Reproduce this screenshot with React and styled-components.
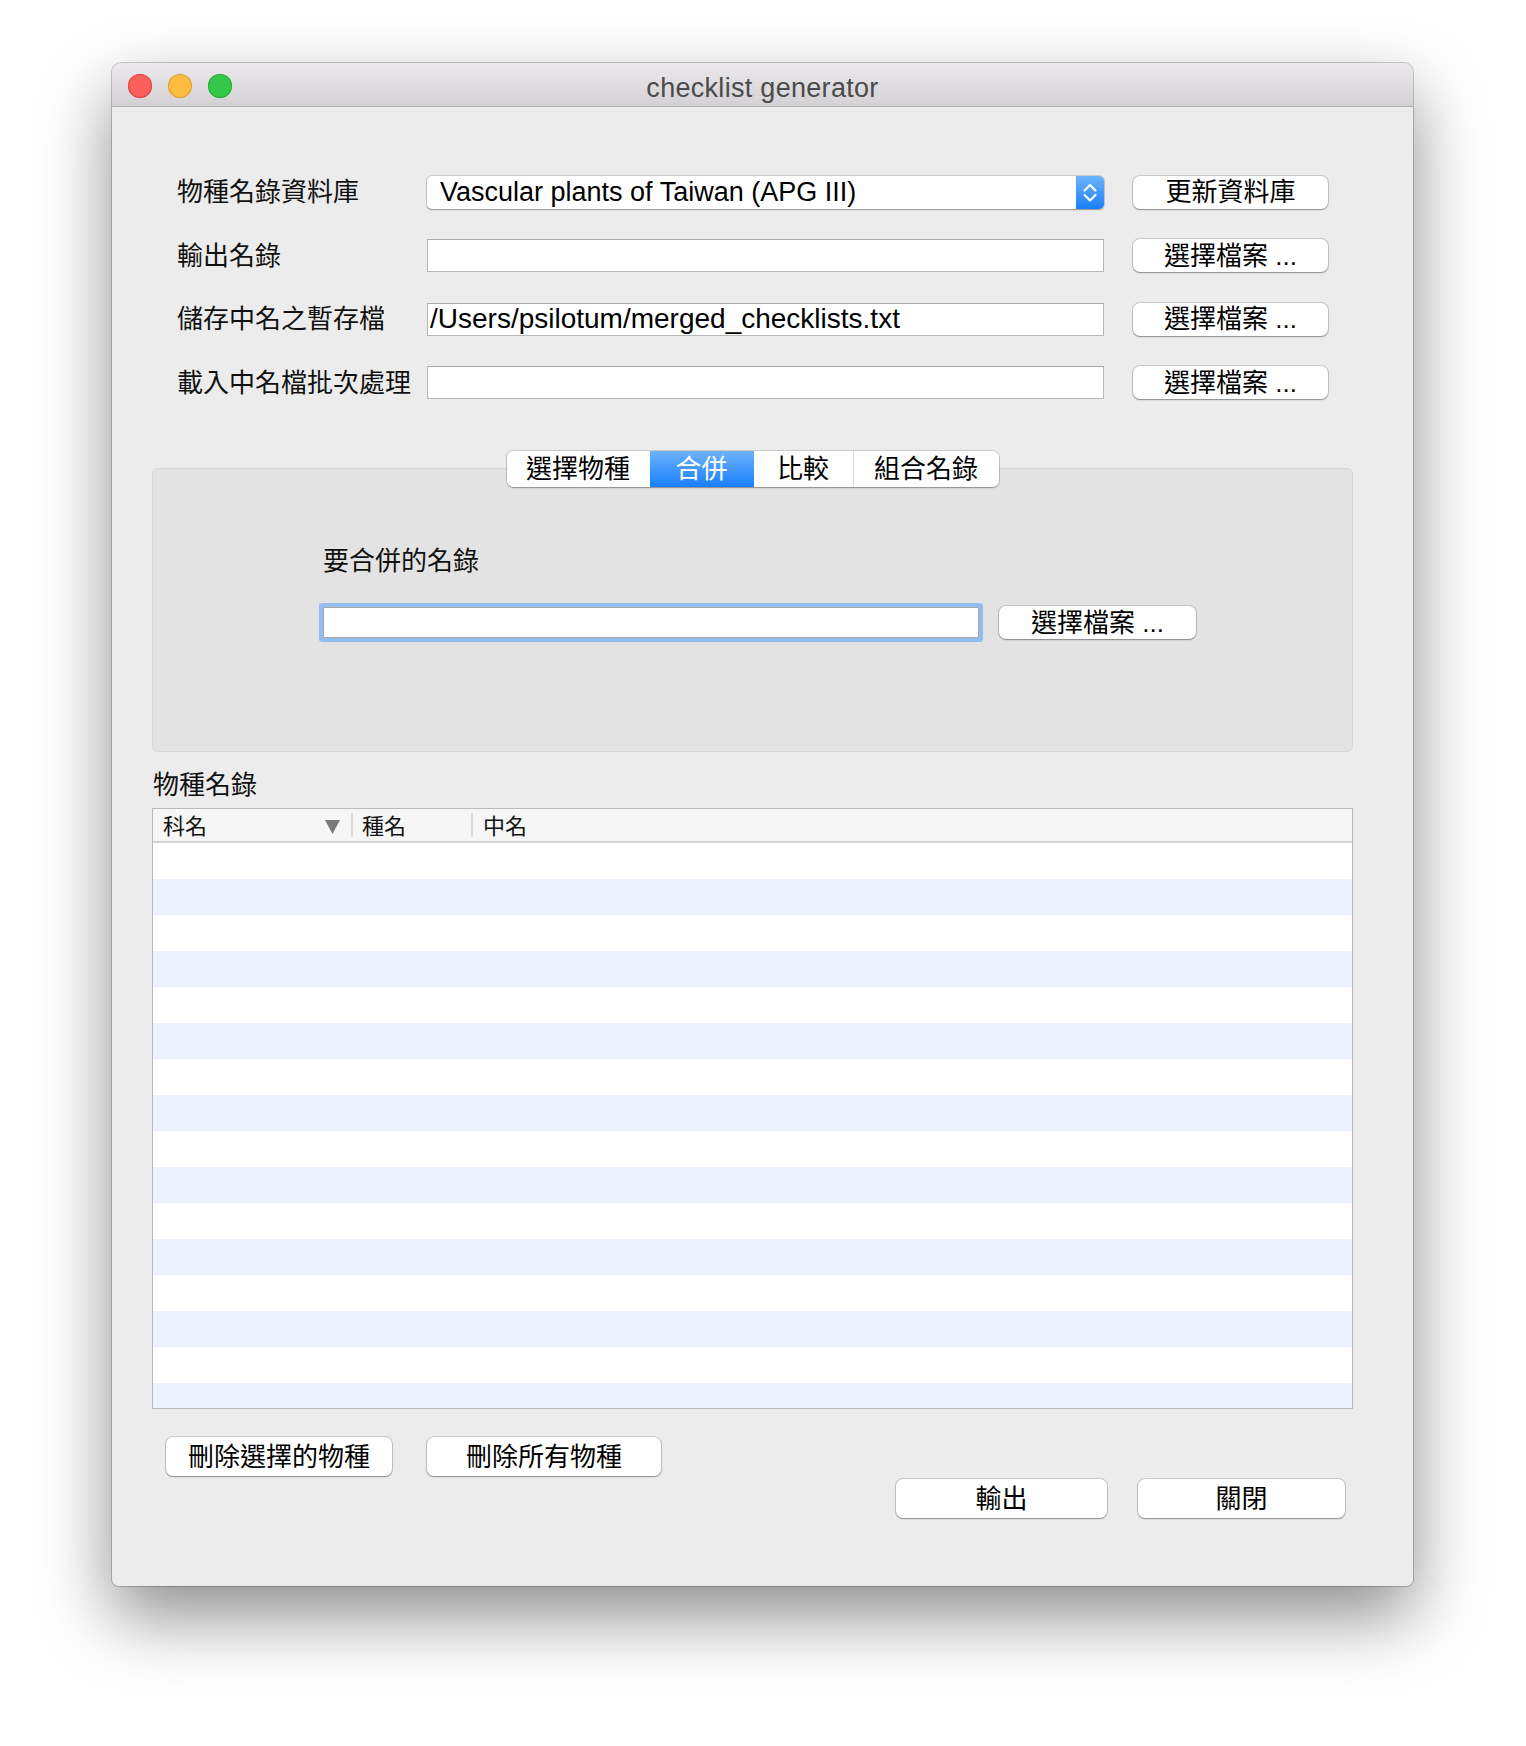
import React from "react";
import styled, { createGlobalStyle } from "styled-components";

const GlobalStyle = createGlobalStyle`
  html, body { margin: 0; padding: 0; background: #ffffff; }
  body { font-family: "Liberation Sans", "Noto Sans CJK TC", sans-serif; color: #000; }
  * { box-sizing: border-box; }
`;

const Page = styled.div`
  padding: 63px 0 0 112px;
  height: 1746px;
  overflow: hidden;
`;

const Window = styled.div`
  width: 1301px;
  background: #ececec;
  border-radius: 9px 9px 7px 7px;
  box-shadow: 0 0 0 1px rgba(0, 0, 0, 0.2), 0 30px 70px rgba(0, 0, 0, 0.45);
  display: flex;
  flex-direction: column;
  overflow: hidden;
`;

const TitleBar = styled.div`
  height: 44px;
  display: grid;
  grid-template-columns: 1fr auto 1fr;
  align-items: center;
  background: linear-gradient(#ebe9eb, #d3d1d3);
  border-bottom: 1px solid #b3b3b3;
`;

const Lights = styled.div`
  display: flex;
  gap: 16px;
  padding: 2px 0 0 16px;
`;

const Light = styled.span`
  width: 24px;
  height: 24px;
  border-radius: 50%;
  background: ${(p) => p.$c};
  box-shadow: inset 0 0 0 1px ${(p) => p.$b};
`;

const Title = styled.div`
  font-size: 27px;
  color: #4b4b4b;
  letter-spacing: 0.3px;
  padding-top: 7px;
`;

const Body = styled.div`
  display: flex;
  flex-direction: column;
  padding: 0 60px 68px 40px;
`;

const Form = styled.div`
  display: grid;
  grid-template-columns: 221px 677px 195px;
  column-gap: 29px;
  row-gap: 29.5px;
  grid-auto-rows: 34px;
  align-items: center;
  margin: 68px 25px 0;
`;

const Label = styled.div`
  font-size: 26px;
  color: #111;
  white-space: nowrap;
  padding-bottom: 5px;
`;

const Popup = styled.div`
  height: 33px;
  display: flex;
  background: #fff;
  border-radius: 5px;
  overflow: hidden;
  box-shadow: 0 0 0 1px rgba(0, 0, 0, 0.13), 0 1px 1.5px rgba(0, 0, 0, 0.28);
`;

const PopupText = styled.div`
  flex: 1;
  font-size: 27px;
  line-height: 33px;
  padding-left: 13px;
  white-space: nowrap;
`;

const Stepper = styled.div`
  width: 28px;
  display: flex;
  align-items: center;
  justify-content: center;
  background: linear-gradient(#6cb3fb, #1a7ffb);
`;

const TextField = styled.div`
  height: 33px;
  background: #fff;
  border: 1px solid #b7b7b7;
  border-top-color: #a9a9a9;
  font-size: 28px;
  line-height: 30px;
  padding: 0 2px;
  white-space: nowrap;
`;

const Button = styled.button`
  width: ${(p) => p.$w}px;
  height: ${(p) => p.$h || 33}px;
  background: #fff;
  border: none;
  border-radius: 7px;
  box-shadow: 0 0 0 1px rgba(0, 0, 0, 0.14), 0 1px 1.5px rgba(0, 0, 0, 0.3);
  font-family: inherit;
  font-size: 26px;
  color: #000;
  display: flex;
  align-items: center;
  justify-content: center;
  padding: 0 0 5px;
  white-space: nowrap;
`;

const TabBar = styled.div`
  display: flex;
  justify-content: center;
  margin-top: 51.5px;
  position: relative;
  z-index: 1;
`;

const TabGroup = styled.div`
  display: flex;
  height: 36px;
  background: #fff;
  border-radius: 7px;
  overflow: hidden;
  box-shadow: 0 0 0 1px rgba(0, 0, 0, 0.14), 0 1px 1.5px rgba(0, 0, 0, 0.28);
`;

const Tab = styled.div`
  width: ${(p) => p.$w}px;
  display: flex;
  align-items: center;
  justify-content: center;
  padding-bottom: 6px;
  font-size: 26px;
  color: ${(p) => (p.$active ? "#fff" : "#000")};
  background: ${(p) => (p.$active ? "linear-gradient(#6cb3fb, #1a7ffb)" : "#fff")};
  border-left: ${(p) => (p.$divider ? "1px solid #dadada" : "none")};
`;

const Panel = styled.div`
  margin-top: -19px;
  height: 284px;
  background: #e3e3e3;
  border: 1px solid #d7d7d7;
  border-radius: 6px;
  padding: 77px 0 0 170px;
`;

const PanelLabel = styled.div`
  font-size: 26px;
  line-height: 30px;
  margin-bottom: 30px;
  color: #111;
`;

const PanelRow = styled.div`
  display: flex;
  align-items: center;
  gap: 20px;
`;

const FocusField = styled.div`
  width: 656px;
  height: 31px;
  background: #fff;
  border: 1px solid #a6a6a6;
  box-shadow: 0 0 0 4px #93bdee;
  border-radius: 1px;
`;

const SectionLabel = styled.div`
  font-size: 26px;
  line-height: 30px;
  margin: 18px 0 8px 1px;
  color: #111;
`;

const Table = styled.div`
  height: 601px;
  background: #fff;
  border: 1px solid #b9b9b9;
  display: flex;
  flex-direction: column;
  overflow: hidden;
`;

const Header = styled.div`
  height: 34px;
  flex: none;
  display: flex;
  align-items: center;
  background: #f6f6f6;
  border-bottom: 2px solid #d2d2d2;
`;

const HeaderCell = styled.div`
  width: ${(p) => (p.$w ? `${p.$w}px` : "auto")};
  flex: ${(p) => (p.$w ? "none" : "1")};
  display: flex;
  align-items: center;
  padding: 0 11px 3px ${(p) => p.$pl}px;
  font-size: 22px;
  color: #111;
`;

const SortMark = styled.svg`
  margin-left: auto;
  margin-top: 6px;
`;

const ColDivider = styled.div`
  width: 2px;
  height: 24px;
  background: #dcdcdc;
  flex: none;
`;

const Row = styled.div`
  height: 36px;
  flex: none;
  background: ${(p) => (p.$alt ? "#edf3fd" : "#ffffff")};
`;

const BottomRow = styled.div`
  display: flex;
  justify-content: ${(p) => (p.$end ? "flex-end" : "flex-start")};
  gap: ${(p) => p.$gap}px;
  margin-top: ${(p) => p.$mt}px;
  padding: ${(p) => (p.$end ? "0 8px 0 0" : "0 0 0 14px")};
`;

const rows = Array.from({ length: 16 }, (_, i) => i);

export default function App() {
  return (
    <>
      <GlobalStyle />
      <Page>
        <Window>
          <TitleBar>
            <Lights>
              <Light $c="#fc605c" $b="#e0443e" />
              <Light $c="#fdbc40" $b="#de9f34" />
              <Light $c="#34c84a" $b="#27aa35" />
            </Lights>
            <Title>checklist generator</Title>
            <div />
          </TitleBar>
          <Body>
            <Form>
              <Label>物種名錄資料庫</Label>
              <Popup>
                <PopupText>Vascular plants of Taiwan (APG III)</PopupText>
                <Stepper>
                  <svg width="28" height="33" viewBox="0 0 28 33">
                    <path d="M8.5 14.5 L14 9 L19.5 14.5" fill="none" stroke="#fff" strokeWidth="2.2" strokeLinecap="round" strokeLinejoin="round" />
                    <path d="M8.5 19 L14 24.5 L19.5 19" fill="none" stroke="#fff" strokeWidth="2.2" strokeLinecap="round" strokeLinejoin="round" />
                  </svg>
                </Stepper>
              </Popup>
              <Button $w={195}>更新資料庫</Button>

              <Label>輸出名錄</Label>
              <TextField />
              <Button $w={195}>選擇檔案 ...</Button>

              <Label>儲存中名之暫存檔</Label>
              <TextField>/Users/psilotum/merged_checklists.txt</TextField>
              <Button $w={195}>選擇檔案 ...</Button>

              <Label>載入中名檔批次處理</Label>
              <TextField />
              <Button $w={195}>選擇檔案 ...</Button>
            </Form>

            <TabBar>
              <TabGroup>
                <Tab $w={143}>選擇物種</Tab>
                <Tab $w={104} $active>合併</Tab>
                <Tab $w={99}>比較</Tab>
                <Tab $w={146} $divider>組合名錄</Tab>
              </TabGroup>
            </TabBar>
            <Panel>
              <PanelLabel>要合併的名錄</PanelLabel>
              <PanelRow>
                <FocusField />
                <Button $w={197}>選擇檔案 ...</Button>
              </PanelRow>
            </Panel>

            <SectionLabel>物種名錄</SectionLabel>
            <Table>
              <Header>
                <HeaderCell $w={198} $pl={10}>
                  科名
                  <SortMark width="15" height="14" viewBox="0 0 15 14">
                    <polygon points="0,0 15,0 7.5,14" fill="#7a7a7a" />
                  </SortMark>
                </HeaderCell>
                <ColDivider />
                <HeaderCell $w={118} $pl={9}>種名</HeaderCell>
                <ColDivider />
                <HeaderCell $pl={10}>中名</HeaderCell>
              </Header>
              {rows.map((i) => (
                <Row key={i} $alt={i % 2 === 1} />
              ))}
            </Table>

            <BottomRow $gap={35} $mt={28}>
              <Button $w={226} $h={39}>刪除選擇的物種</Button>
              <Button $w={234} $h={39}>刪除所有物種</Button>
            </BottomRow>
            <BottomRow $end $gap={31} $mt={3}>
              <Button $w={211} $h={39}>輸出</Button>
              <Button $w={207} $h={39}>關閉</Button>
            </BottomRow>
          </Body>
        </Window>
      </Page>
    </>
  );
}
